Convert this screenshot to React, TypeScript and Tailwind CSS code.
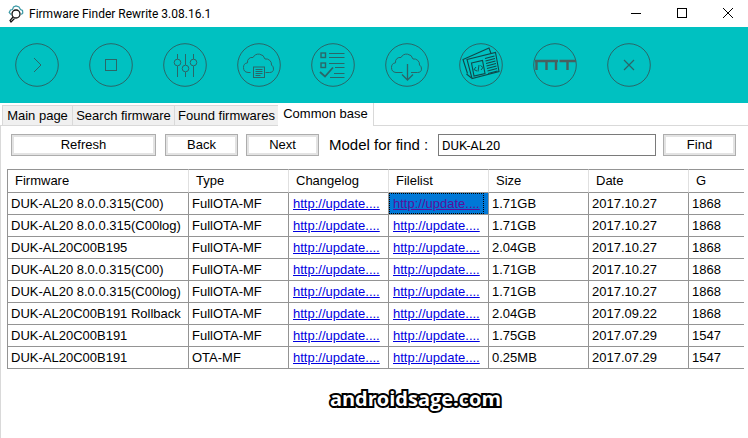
import { useState } from "react";
import type { ReactNode } from "react";

const tools: { label: string; art: ReactNode }[] = [
  { label: "Start", art: <path d="M19 15l7 7-7 7" /> },
  { label: "Stop", art: <rect x="16.500" y="16.500" width="11" height="11" /> },
  {
    label: "Settings",
    art: (
      <>
        <path d="M14.500 11v5M14.500 23v11M22.500 11v11M22.500 29v5M30.500 11v5M30.500 23v11" />
        <circle cx="14.500" cy="19.500" r="3.300" />
        <circle cx="22.500" cy="25.500" r="3.300" />
        <circle cx="30.500" cy="19.500" r="3.300" />
      </>
    ),
  },
  {
    label: "Cloud log",
    art: (
      <>
        <path d="M13.500 29.500H11a5 5 0 0 1-4.500-5 4.700 4.700 0 0 1 4-4.700 4.600 4.600 0 0 1 5.500-5.300 6.500 6.500 0 0 1 12 1.500 5.500 5.500 0 0 1 6.500 6 4.500 4.500 0 0 1 2 4.200c0 2-1.500 3.300-4 3.300h-4" />
        <rect x="16.500" y="24" width="11" height="10.500" />
        <path d="M18.500 26.500h7M18.500 28.500h7M18.500 30.500h7M18.500 32.500h5" />
      </>
    ),
  },
  {
    label: "Checklist",
    art: (
      <>
        <g strokeWidth="1.400">
          <rect x="10" y="10" width="4.500" height="4.500" />
          <rect x="10" y="20" width="4.500" height="4.500" />
          <path d="M9 29l5 4.500 8-9" strokeWidth="1.800" />
        </g>
        <path d="M18 10.500h15.500M18 14.500h15.500M18 20.500h15.500M24 24.500h9.500M23 30.500h10.500M19 34.500h14.500" />
      </>
    ),
  },
  {
    label: "Download",
    art: (
      <>
        <path d="M17.500 29.500H11a5 5 0 0 1-4.500-5 4.700 4.700 0 0 1 4-4.700 4.600 4.600 0 0 1 5.500-5.300 6.500 6.500 0 0 1 12 1.500 5.500 5.500 0 0 1 6.500 6 4.500 4.500 0 0 1 2 4.200c0 2-1.500 3.300-4 3.300h-6.500" />
        <path d="M22.500 21v16M17 31.500l5.500 5.500 5.500-5.500" strokeWidth="1.300" />
      </>
    ),
  },
  {
    label: "News",
    art: (
      <g stroke="#10484a" strokeWidth="1.100">
        <path d="M8.500 30.500L4 16.500 30 5l2 5.500M7.500 31l5 4" />
        <path d="M8 16.500l28.500-7L40 28.500l-27 7z" />
        <path d="M12.500 20l11-2.500 2.500 13-11 2.500z" />
        <path d="M17 24l-2 2.500 3 1.500M21.500 22.500l2.500 2-2 2.500M20 22l-1 6.500" strokeWidth="0.900" />
        <path d="M26 15.500l9.500-2.500M26.500 18l9.500-2.500M27 20.500l9.500-2.500M27.500 23l9.500-2.500M28 25.500l9.500-2.500M28.500 28l9.500-2.500M29 30.500l9.500-2.500" />
      </g>
    ),
  },
  {
    label: "MT",
    art: (
      <path
        d="M2 18h23M26.500 18H43M3.500 18v9M13.500 18v9M23 18v9M34.500 18v9"
        stroke="#48605f"
        strokeWidth="2.400"
      />
    ),
  },
  { label: "Exit", art: <path d="M17 17l10 10M27 17L17 27" strokeWidth="1.200" /> },
];

const tabs = [
  { name: "Main page", width: "w-[70px]" },
  { name: "Search firmware", width: "w-[102px]" },
  { name: "Found firmwares", width: "w-[104px]" },
  { name: "Common base", width: "w-[96px]" },
];

const columns = [
  { name: "Firmware", width: "w-[181px]" },
  { name: "Type", width: "w-[100px]" },
  { name: "Changelog", width: "w-[100px]" },
  { name: "Filelist", width: "w-[100px]" },
  { name: "Size", width: "w-[100px]" },
  { name: "Date", width: "w-[100px]" },
  { name: "G", width: "" },
];

const rows = [
  ["DUK-AL20 8.0.0.315(C00)", "FullOTA-MF", "1.71GB", "2017.10.27", "1868"],
  ["DUK-AL20 8.0.0.315(C00log)", "FullOTA-MF", "1.71GB", "2017.10.27", "1868"],
  ["DUK-AL20C00B195", "FullOTA-MF", "2.04GB", "2017.10.27", "1868"],
  ["DUK-AL20 8.0.0.315(C00)", "FullOTA-MF", "1.71GB", "2017.10.27", "1868"],
  ["DUK-AL20 8.0.0.315(C00log)", "FullOTA-MF", "1.71GB", "2017.10.27", "1868"],
  ["DUK-AL20C00B191 Rollback", "FullOTA-MF", "2.04GB", "2017.09.22", "1868"],
  ["DUK-AL20C00B191", "FullOTA-MF", "1.75GB", "2017.07.29", "1547"],
  ["DUK-AL20C00B191", "OTA-MF", "0.25MB", "2017.07.29", "1547"],
];

const cell = "h-[22px] border-b border-l border-[#949494] p-0 pl-[3px] whitespace-nowrap";

const windowButton = "flex h-6 w-[46px] items-center justify-center pl-[6px]";

function PushButton({ children, width }: { children: ReactNode; width: string }) {
  return (
    <button
      className={`h-[22px] shrink-0 border border-[#adadad] bg-white leading-4 shadow-[inset_0_0_0_2px_#e3e3e3] ${width}`}
    >
      {children}
    </button>
  );
}

function TitleBar() {
  return (
    <header className="flex h-[27px] items-center bg-white pl-2">
      <svg width="16" height="18" viewBox="0 0 16 18" fill="none" className="shrink-0" aria-hidden="true">
        <path d="M3 9.500L1.200 7.500 2.500 5l2-.5L5.500 2 8 1l3 1 1.500 2.500 2 1 .3 2.500-1.500 1.500" stroke="#3c9aa6" strokeWidth="1.200" />
        <circle cx="8" cy="9" r="4" stroke="#111" strokeWidth="1.300" />
        <path d="M5 12l-3 3.500 1 1.500 3.500-3.500" stroke="#111" strokeWidth="1.200" />
      </svg>
      <h1 className="ml-[5px] flex-1 font-[Roboto,sans-serif] text-[12px] leading-4">
        Firmware Finder Rewrite 3.08.16.1
      </h1>
      <button aria-label="Minimize" className={windowButton}>
        <svg width="12" height="12" viewBox="0 0 12 12" stroke="#000" aria-hidden="true">
          <path d="M1 5.500h10" />
        </svg>
      </button>
      <button aria-label="Maximize" className={windowButton}>
        <svg width="12" height="12" viewBox="0 0 12 12" fill="none" stroke="#000" aria-hidden="true">
          <rect x="1.500" y=".5" width="9" height="9" />
        </svg>
      </button>
      <button aria-label="Close" className={windowButton}>
        <svg width="12" height="12" viewBox="0 0 12 12" stroke="#000" aria-hidden="true">
          <path d="M1 0l10 10M11 0L1 10" />
        </svg>
      </button>
    </header>
  );
}

export default function App() {
  const [active, setActive] = useState("Common base");
  const [model, setModel] = useState("DUK-AL20");

  return (
    <div className="flex min-h-screen flex-col bg-white font-['Liberation_Sans',Arial,sans-serif] text-[13px] leading-4 text-black">
      <TitleBar />
      <nav aria-label="Actions" className="flex gap-[30px] bg-[#00c1c1] px-[15px] py-4">
        {tools.map((tool) => (
          <button key={tool.label} aria-label={tool.label} className="size-11 shrink-0">
            <svg width="44" height="44" viewBox="0 0 44 44" fill="none" stroke="#2b6668" aria-hidden="true">
              <circle cx="22" cy="22" r="21.300" />
              {tool.art}
            </svg>
          </button>
        ))}
      </nav>

      <div className="flex items-end border-b border-[#d9d9d9] pl-[2px]" role="tablist">
        {tabs.map((tab) => (
          <button
            key={tab.name}
            role="tab"
            aria-selected={tab.name === active}
            onClick={() => setActive(tab.name)}
            className={`shrink-0 border-[#d9d9d9] whitespace-nowrap ${tab.width} ${
              tab.name === active ? "-mb-px h-[23px] border-r bg-white pb-px" : "h-5 border-t border-l bg-[#f0f0f0] pt-px"
            }`}
          >
            {tab.name}
          </button>
        ))}
      </div>

      <main className="flex-1 border-l border-[#d9d9d9] pt-2 pr-1 pl-[6px]">
        <div className="flex items-center pr-2 pl-1">
          <PushButton width="w-[145px]">Refresh</PushButton>
          <div className="ml-[9px] flex gap-2">
            <PushButton width="w-[73px]">Back</PushButton>
            <PushButton width="w-[73px]">Next</PushButton>
          </div>
          <label htmlFor="model" className="ml-[10px] w-[109px] shrink-0 text-[15px] whitespace-nowrap">
            Model for find :
          </label>
          <input
            id="model"
            value={model}
            onChange={(e) => setModel(e.target.value)}
            className="h-[22px] min-w-0 flex-1 border border-[#7a7a7a] bg-white px-[3px] font-[Roboto,sans-serif] outline-none"
          />
          <div className="ml-[7px] flex">
            <PushButton width="w-[73px]">Find</PushButton>
          </div>
        </div>

        <table className="mt-[13px] w-full table-fixed border-separate border-spacing-0 text-left">
          <thead>
            <tr>
              {columns.map((column, i) => (
                <th
                  key={column.name}
                  scope="col"
                  className={`h-6 border-t border-b border-l border-y-[#949494] p-0 pl-[7px] font-normal ${column.width} ${
                    i === 0 ? "border-l-[#949494]" : "border-l-[#e0e0e0]"
                  }`}
                >
                  {column.name}
                </th>
              ))}
            </tr>
          </thead>
          <tbody>
            {rows.map(([firmware, type, size, date, group], i) => (
              <tr key={i}>
                <td className={cell}>{firmware}</td>
                <td className={cell}>{type}</td>
                <td className={cell}>
                  <a href="#changelog" className="pl-px text-[#0000e0] underline">
                    http://update....
                  </a>
                </td>
                {i === 0 ? (
                  <td className="h-[22px] border-b border-l border-[#949494] bg-[#0078d7] p-0">
                    <a
                      href="#filelist"
                      className="mr-1 block h-[21px] border border-dotted border-black pl-[3px] leading-5 text-[#5a0f9c] underline"
                    >
                      http://update....
                    </a>
                  </td>
                ) : (
                  <td className={cell}>
                    <a href="#filelist" className="pl-px text-[#0000e0] underline">
                      http://update....
                    </a>
                  </td>
                )}
                <td className={cell}>{size}</td>
                <td className={cell}>{date}</td>
                <td className={cell}>{group}</td>
              </tr>
            ))}
          </tbody>
        </table>

        <p className="mt-4 pl-20 text-center font-['Open_Sans',sans-serif] text-[20px] leading-7 font-bold text-white [-webkit-text-stroke:4px_#000] [paint-order:stroke_fill]">
          androidsage.com
        </p>
      </main>
    </div>
  );
}
